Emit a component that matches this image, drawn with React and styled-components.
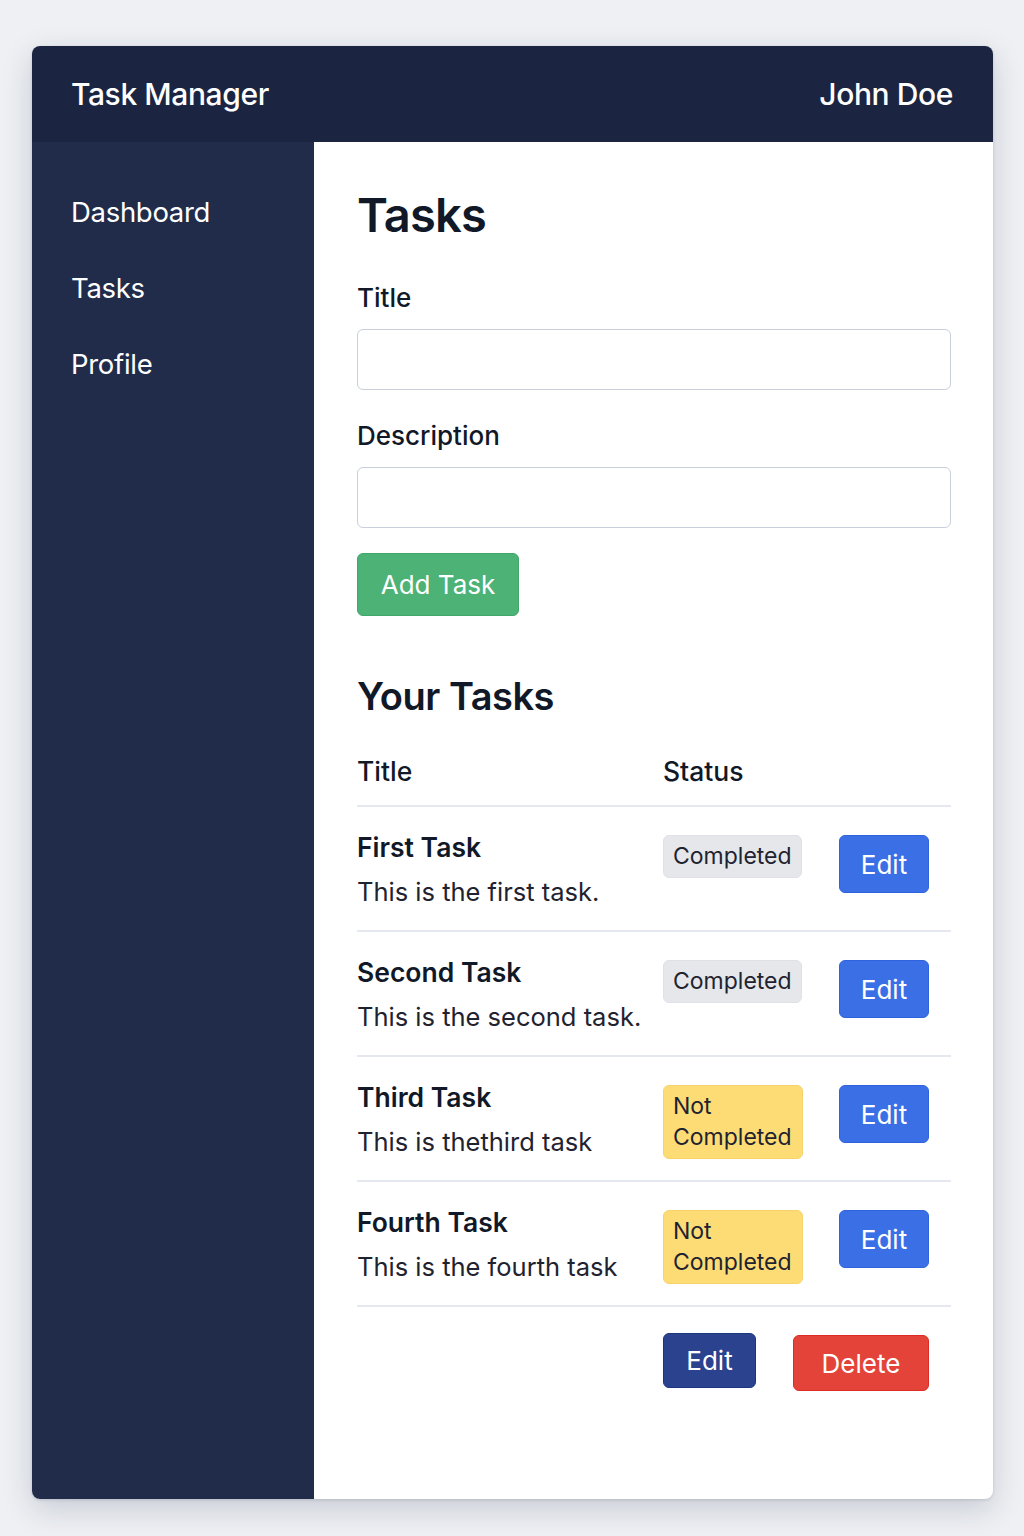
import styled, { createGlobalStyle } from 'styled-components';

const tasks = [
    { title: 'First Task', description: 'This is the first task.', done: true },
    { title: 'Second Task', description: 'This is the second task.', done: true },
    { title: 'Third Task', description: 'This is thethird task', done: false },
    { title: 'Fourth Task', description: 'This is the fourth task', done: false }
]

const GlobalStyle = createGlobalStyle`
 body {
     margin: 0;
     background-color: #eef0f3;
     font-family: Inter, "Liberation Sans", sans-serif;
     color: #111827;
 }
`;

const TaskRow = ({ title, description, done }) => {
    return <Row>
        <div>
            <TaskTitle>{title}</TaskTitle>
            <TaskText>{description}</TaskText>
        </div>
        <div>
            <Badge done={done}>{done ? 'Completed' : 'Not Completed'}</Badge>
        </div>
        <div>
            <Button variant='blue' w={90} h={58} style={{ marginTop: 6 }}>Edit</Button>
        </div>
    </Row>
}

export default function App() {
    return <Page>
        <GlobalStyle />
        <Card>
            <Header>
                <div>Task Manager</div>
                <div>John Doe</div>
            </Header>
            <Body>
                <Sidebar>
                    <NavItem>Dashboard</NavItem>
                    <NavItem>Tasks</NavItem>
                    <NavItem>Profile</NavItem>
                </Sidebar>
                <Content>
                    <PageTitle>Tasks</PageTitle>
                    <Label>Title</Label>
                    <Input />
                    <Label spaced>Description</Label>
                    <Input />
                    <Button variant='green' w={162} h={63} style={{ marginTop: 25 }}>Add Task</Button>
                    <SectionTitle>Your Tasks</SectionTitle>
                    <HeadRow>
                        <div>Title</div>
                        <div>Status</div>
                    </HeadRow>
                    {
                        tasks.map((item, index) =>
                            <TaskRow key={index} {...item} />
                        )
                    }
                    <Footer>
                        <Button variant='navy' w={93} h={55}>Edit</Button>
                        <Button variant='red' w={136} h={56} style={{ marginTop: 2 }}>Delete</Button>
                    </Footer>
                </Content>
            </Body>
        </Card>
    </Page>
}

const Page = styled.div`
 padding: 46px 31px 37px 32px;
`;

const Card = styled.div`
 width: 961px;
 height: 1453px;
 border-radius: 8px;
 overflow: hidden;
 display: flex;
 flex-direction: column;
 background-color: white;
 box-shadow: 0 10px 30px rgba(30, 40, 70, 0.18), 0 1px 3px rgba(30, 40, 70, 0.15);
`;

const Header = styled.div`
 height: 96px;
 flex-shrink: 0;
 display: flex;
 align-items: center;
 justify-content: space-between;
 padding: 0 40px 0 39px;
 background-color: #1b2542;
 color: white;
 font-size: 30px;
 font-weight: 500;
 letter-spacing: -0.4px;
`;

const Body = styled.div`
 flex: 1;
 display: flex;
`;

const Sidebar = styled.div`
 width: 282px;
 background-color: #212c4b;
 padding: 50px 0 0 39px;
 box-sizing: border-box;
 display: flex;
 flex-direction: column;
 gap: 36px;
`;

const NavItem = styled.div`
 color: white;
 font-size: 27.5px;
 line-height: 40px;
 font-weight: 400;
 letter-spacing: -0.3px;
`;

const Content = styled.div`
 flex: 1;
 padding: 45px 42px 0 43px;
 display: flex;
 flex-direction: column;
 align-items: flex-start;
`;

const PageTitle = styled.h1`
 margin: 0 0 38px;
 font-size: 47px;
 line-height: 56px;
 font-weight: 600;
 letter-spacing: -0.8px;
`;

const Label = styled.div`
 font-size: 26px;
 line-height: 34px;
 font-weight: 500;
 margin-top: ${props => props.spaced ? 29 : 0}px;
 margin-bottom: 14px;
`;

const Input = styled.div`
 align-self: stretch;
 height: 61px;
 box-sizing: border-box;
 border: 1.5px solid #c9cfdb;
 border-radius: 6px;
`;

const colors = {
    green: ['#4db276', '#3fa768'],
    blue: ['#3a6fe6', '#2f63dd'],
    navy: ['#2b428f', '#1e3480'],
    red: ['#e4433a', '#dc2c23']
}

const Button = styled.div`
 width: ${props => props.w}px;
 height: ${props => props.h}px;
 box-sizing: border-box;
 display: flex;
 align-items: center;
 justify-content: center;
 background-color: ${props => colors[props.variant][0]};
 border: 1px solid ${props => colors[props.variant][1]};
 border-radius: 6px;
 color: white;
 font-size: 26px;
 font-weight: 400;
`;

const SectionTitle = styled.h2`
 margin: 57px 0 34px;
 font-size: 38px;
 line-height: 46px;
 font-weight: 600;
 letter-spacing: -0.5px;
`;

const grid = `
 align-self: stretch;
 display: grid;
 grid-template-columns: 306px 176px 1fr;
 border-bottom: 2px solid #e5e8ee;
`;

const HeadRow = styled.div`
 ${grid}
 padding-bottom: 16px;
 font-size: 26.5px;
 line-height: 36px;
 font-weight: 500;
`;

const Row = styled.div`
 ${grid}
 height: 125px;
 box-sizing: border-box;
 padding-top: 22px;
 align-items: start;
`;

const TaskTitle = styled.div`
 font-size: 26.5px;
 line-height: 36px;
 font-weight: 600;
 margin-bottom: 9px;
`;

const TaskText = styled.div`
 font-size: 25.5px;
 line-height: 36px;
 color: #1f2330;
`;

const Badge = styled.div`
 display: inline-block;
 margin-top: 6px;
 max-width: 140px;
 box-sizing: border-box;
 padding: 5px 9px;
 border-radius: 6px;
 font-size: 23px;
 line-height: 31px;
 color: #1f2330;
 background-color: ${props => props.done ? '#e5e7eb' : '#fddc76'};
 border: 1px solid ${props => props.done ? '#dfe1e6' : '#f8d26a'};
`;

const Footer = styled.div`
 align-self: stretch;
 display: flex;
 justify-content: flex-end;
 align-items: flex-start;
 gap: 37px;
 padding: 26px 22px 0 0;
`;
